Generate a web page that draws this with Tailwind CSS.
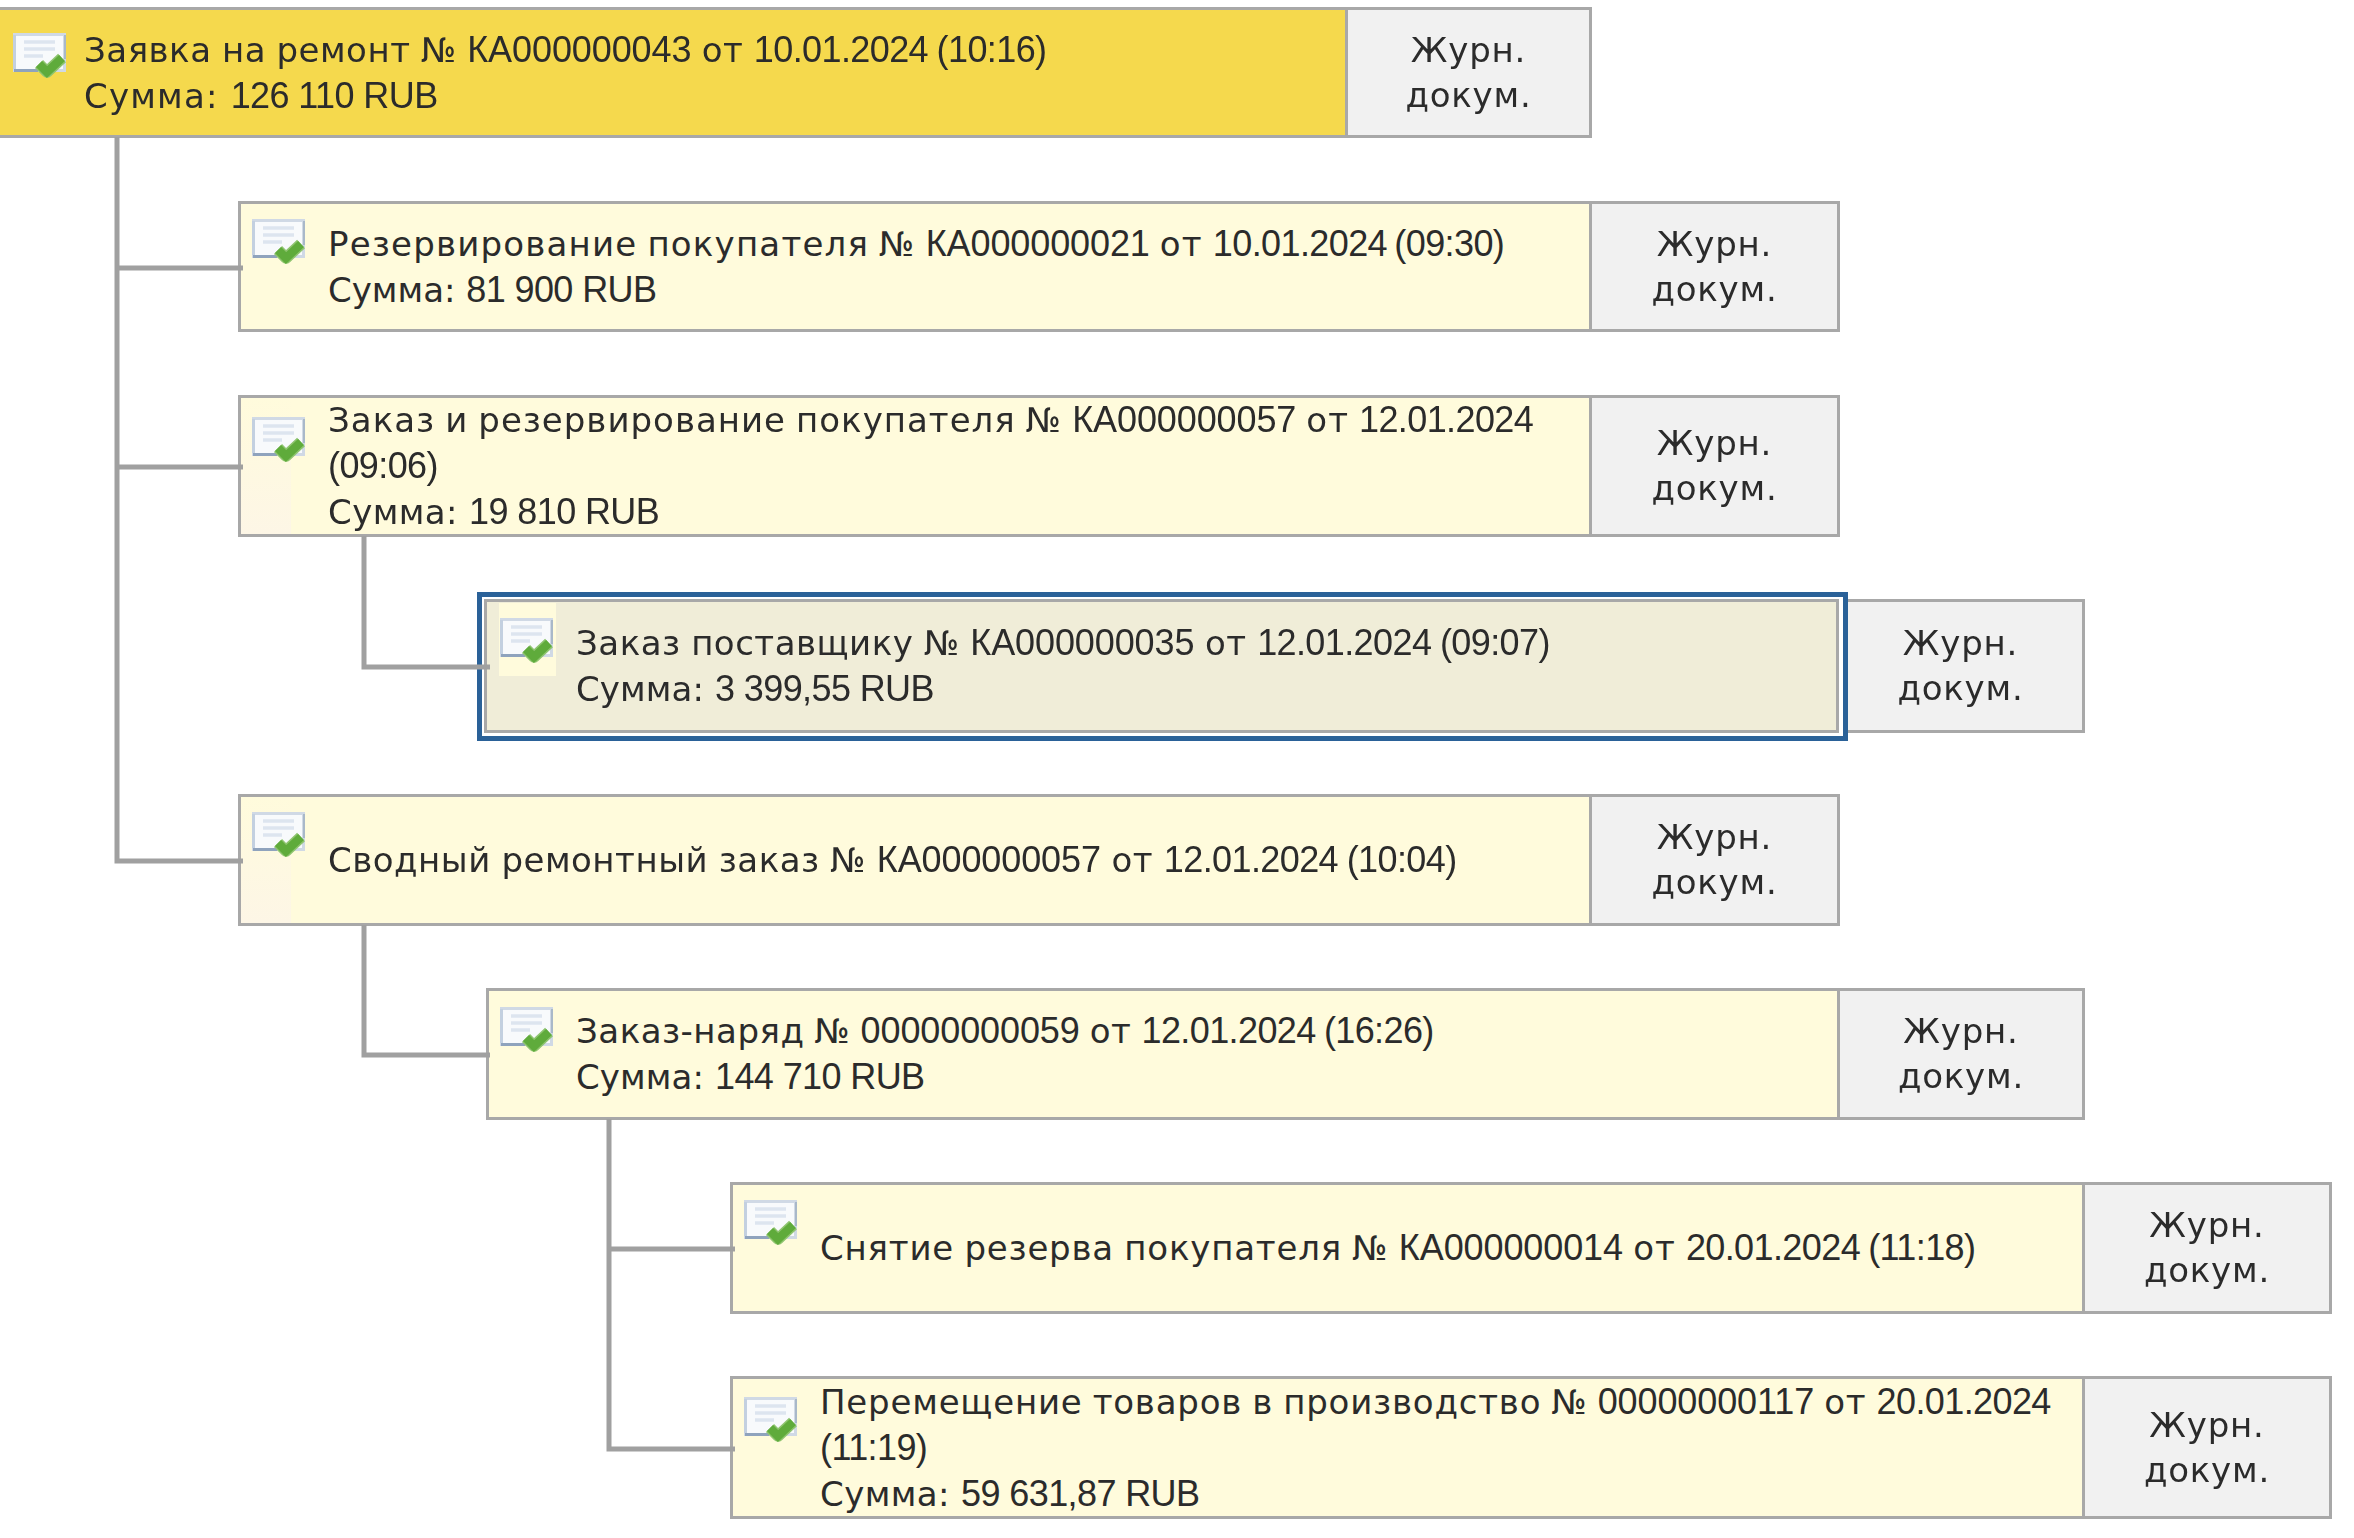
<!DOCTYPE html>
<html lang="ru">
<head>
  <meta charset="UTF-8">
  <title>Структура подчиненности</title>
  <script src="https://cdn.jsdelivr.net/npm/@tailwindcss/browser@4"></script>
</head>
<body class="bg-white">
  <svg class="hidden">
    <symbol id="doc" viewBox="0 0 54 47">
      <rect x="1.5" y="1.5" width="50" height="36" fill="#f8fafc" stroke="#d0d9e5" stroke-width="3"/>
      <path d="M52 2V26" stroke="#a9b8c9" stroke-width="2"/>
      <path d="M1 37.5H25" stroke="#8fa3bd" stroke-width="3"/>
      <path d="M1.5 2V36" stroke="#c3d0e0" stroke-width="3"/>
      <path d="M11 9H42M11 16H42M11 23H30" stroke="#dde5ef" stroke-width="3.5"/>
      <path d="M26 31L34 39L49 25" fill="none" stroke="#8ec46f" stroke-width="11.5" stroke-linejoin="round"/>
      <path d="M26 31L34 39L49 25" fill="none" stroke="#5fab3b" stroke-width="8.5"/>
    </symbol>
  </svg>

  <div class="relative w-[2354px] h-[1538px] pt-[7px] overflow-hidden blur-[0.6px] font-['DejaVu_Sans',sans-serif] text-[34px] tracking-[0.8px] leading-[45px] text-[#2b2b2b] [&_span]:font-['Liberation_Sans',sans-serif] [&_span]:text-[36px] [&_span]:tracking-[-0.6px]">

    <!-- Заявка на ремонт -->
    <div class="flex h-[131px]">
      <div class="flex items-center w-[1348px] pl-[84px] relative bg-[#f5d94d] border-y-[3px] border-r-[3px] border-[#a8a8a8]">
        <svg class="absolute left-[13px] top-[23px] w-[54px] h-[47px]"><use href="#doc"/></svg>
        <div>
          <div class="tracking-[0.5px] [word-spacing:-0.85px]">Заявка на ремонт № <span class="tracking-[-0.1px]!">КА000000043</span> от <span>10.01.2024 (10:16)</span></div>
          <div class="tracking-[1.2px]">Сумма: <span>126 110 RUB</span></div>
        </div>
      </div>
      <div class="flex items-center justify-center text-center w-[244px] bg-[#f1f1f1] border-[3px] border-l-0 border-[#a8a8a8]">Журн.<br>докум.</div>
    </div>

    <!-- Резервирование покупателя -->
    <div class="flex h-[131px] mt-[63px] ml-[238px]">
      <div class="flex items-center w-[1354px] pl-[87px] relative bg-[#fffbdc] border-[3px] border-[#a8a8a8]">
        <svg class="absolute left-[11px] top-[15px] w-[54px] h-[47px]"><use href="#doc"/></svg>
        <div>
          <div class="tracking-[1.2px] [word-spacing:-2px]">Резервирование покупателя № <span class="tracking-[-0.1px]!">КА000000021</span> от <span>10.01.2024 (09:30)</span></div>
          <div class="tracking-[0px]">Сумма: <span>81 900 RUB</span></div>
        </div>
      </div>
      <div class="flex items-center justify-center text-center w-[248px] bg-[#f1f1f1] border-[3px] border-l-0 border-[#a8a8a8]">Журн.<br>докум.</div>
    </div>

    <!-- Заказ и резервирование покупателя -->
    <div class="flex h-[142px] mt-[63px] ml-[238px]">
      <div class="flex items-center w-[1354px] pl-[87px] relative bg-[#fffbdc] border-[3px] border-[#a8a8a8]">
        <div class="absolute left-0 top-0 bottom-0 w-[50px] bg-linear-to-b from-transparent to-[#fdf6e6]"></div>
        <svg class="absolute left-[11px] top-[19px] w-[54px] h-[47px]"><use href="#doc"/></svg>
        <div class="relative">
          <div class="tracking-[1px] [word-spacing:-1.75px]">Заказ и резервирование покупателя № <span class="tracking-[-0.1px]!">КА000000057</span> от <span>12.01.2024</span></div>
          <div><span>(09:06)</span></div>
          <div class="tracking-[0.4px]">Сумма: <span>19 810 RUB</span></div>
        </div>
      </div>
      <div class="flex items-center justify-center text-center w-[248px] bg-[#f1f1f1] border-[3px] border-l-0 border-[#a8a8a8]">Журн.<br>докум.</div>
    </div>

    <!-- Заказ поставщику (выделен) -->
    <div class="flex h-[134px] mt-[62px] ml-[484px]">
      <div class="flex items-center w-[1355px] pl-[89px] relative z-10 bg-[#f0edd8] border-[3px] border-[#a8a8a8]">
        <div class="absolute left-[12px] top-[1px] w-[57px] h-[73px] pl-[1px] pt-[15px] bg-[#fffbdc]">
          <svg class="w-[54px] h-[47px]"><use href="#doc"/></svg>
        </div>
        <div class="relative">
          <div class="tracking-[0.5px] [word-spacing:-0.75px]">Заказ поставщику № <span class="tracking-[-0.1px]!">КА000000035</span> от <span>12.01.2024 (09:07)</span></div>
          <div class="tracking-[0.1px]">Сумма: <span>3 399,55 RUB</span></div>
        </div>
        <div class="absolute -top-[10px] -left-[10px] -right-[12px] -bottom-[11px] border-[5px] border-[#2a6198]">
          <div class="w-full h-full border-[2px] border-r-[4px] border-b-[3px] border-white"></div>
        </div>
      </div>
      <div class="flex items-center justify-center text-center w-[246px] bg-[#f1f1f1] border-[3px] border-l-0 border-[#a8a8a8]">Журн.<br>докум.</div>
    </div>

    <!-- Сводный ремонтный заказ -->
    <div class="flex h-[132px] mt-[61px] ml-[238px]">
      <div class="flex items-center w-[1354px] pl-[87px] relative bg-[#fffbdc] border-[3px] border-[#a8a8a8]">
        <div class="absolute left-0 top-0 bottom-0 w-[50px] bg-linear-to-b from-transparent to-[#fdf6e6]"></div>
        <svg class="absolute left-[11px] top-[15px] w-[54px] h-[47px]"><use href="#doc"/></svg>
        <div class="relative tracking-[0.5px] [word-spacing:-0.65px]">Сводный ремонтный заказ № <span class="tracking-[-0.1px]!">КА000000057</span> от <span>12.01.2024 (10:04)</span></div>
      </div>
      <div class="flex items-center justify-center text-center w-[248px] bg-[#f1f1f1] border-[3px] border-l-0 border-[#a8a8a8]">Журн.<br>докум.</div>
    </div>

    <!-- Заказ-наряд -->
    <div class="flex h-[132px] mt-[62px] ml-[486px]">
      <div class="flex items-center w-[1354px] pl-[87px] relative bg-[#fffbdc] border-[3px] border-[#a8a8a8]">
        <svg class="absolute left-[11px] top-[16px] w-[54px] h-[47px]"><use href="#doc"/></svg>
        <div>
          <div class="tracking-[0.5px] [word-spacing:-1.2px]">Заказ-наряд № <span class="tracking-[-0.1px]!">00000000059</span> от <span>12.01.2024 (16:26)</span></div>
          <div class="tracking-[0.1px]">Сумма: <span>144 710 RUB</span></div>
        </div>
      </div>
      <div class="flex items-center justify-center text-center w-[245px] bg-[#f1f1f1] border-[3px] border-l-0 border-[#a8a8a8]">Журн.<br>докум.</div>
    </div>

    <!-- Снятие резерва покупателя -->
    <div class="flex h-[132px] mt-[62px] ml-[730px]">
      <div class="flex items-center w-[1355px] pl-[87px] relative bg-[#fffbdc] border-[3px] border-[#a8a8a8]">
        <svg class="absolute left-[11px] top-[15px] w-[54px] h-[47px]"><use href="#doc"/></svg>
        <div class="[word-spacing:-1.25px]">Снятие резерва покупателя № <span class="tracking-[-0.1px]!">КА000000014</span> от <span>20.01.2024 (11:18)</span></div>
      </div>
      <div class="flex items-center justify-center text-center w-[247px] bg-[#f1f1f1] border-[3px] border-l-0 border-[#a8a8a8]">Журн.<br>докум.</div>
    </div>

    <!-- Перемещение товаров в производство -->
    <div class="flex h-[143px] mt-[62px] ml-[730px]">
      <div class="flex items-center w-[1355px] pl-[87px] relative bg-[#fffbdc] border-[3px] border-[#a8a8a8]">
        <svg class="absolute left-[11px] top-[18px] w-[54px] h-[47px]"><use href="#doc"/></svg>
        <div>
          <div class="[word-spacing:-1.5px]">Перемещение товаров в производство № <span class="tracking-[-0.1px]!">00000000117</span> от <span>20.01.2024</span></div>
          <div><span>(11:19)</span></div>
          <div class="tracking-[0.4px]">Сумма: <span>59 631,87 RUB</span></div>
        </div>
      </div>
      <div class="flex items-center justify-center text-center w-[247px] bg-[#f1f1f1] border-[3px] border-l-0 border-[#a8a8a8]">Журн.<br>докум.</div>
    </div>

    <!-- Линии связи -->
    <svg class="absolute left-0 top-0 z-20 w-[2354px] h-[1538px] pointer-events-none" fill="none" stroke="#a0a0a0" stroke-width="5">
      <path d="M117 137V861H243M117 268H243M117 467H243"/>
      <path d="M364 536V667H490"/>
      <path d="M364 925V1055H490"/>
      <path d="M609 1119V1449H735M609 1249H735"/>
    </svg>
  </div>
</body>
</html>
